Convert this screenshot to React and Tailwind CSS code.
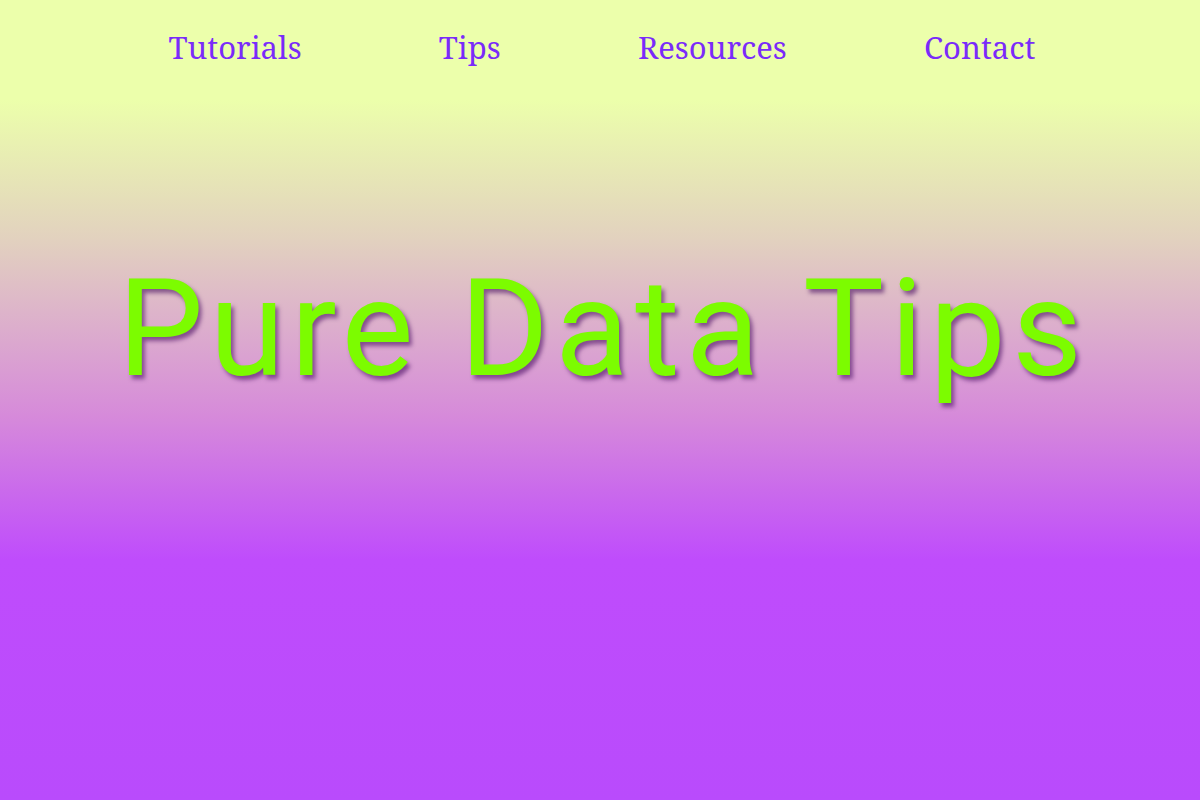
import React from 'react';

const links = ['Tutorials', 'Tips', 'Resources', 'Contact'];

export default function App() {
    return (
        <div className="w-full h-[800px] overflow-hidden bg-[linear-gradient(to_bottom,#ecffab_0%,#ecffab_12.5%,#e2d1bf_30%,#d68ada_52%,#bf4cfc_70%,#b94bfc_100%)]">
            {/* Nav */}
            <nav className="flex justify-around items-center pl-[100px] pr-[96px] h-[94px] font-['Noto_Serif','DejaVu_Serif',serif] text-[31px] text-[#7a2bfa]">
                {links.map((l) => (
                    <a key={l} href="#" className="leading-none">
                        {l}
                    </a>
                ))}
            </nav>

            {/* Title */}
            <div className="flex justify-center pt-[167px] pl-[6px]">
                <h1 className="font-['Roboto',sans-serif] text-[136px] leading-none tracking-[0.045em] text-[#7cfc00] [text-shadow:3px_4px_4px_rgba(60,0,90,0.55)]">
                    Pure Data Tips
                </h1>
            </div>
        </div>
    );
}
